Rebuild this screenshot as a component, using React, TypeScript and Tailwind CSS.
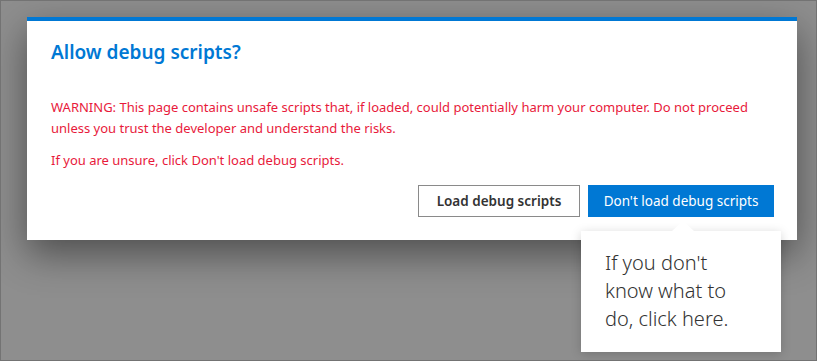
import React from 'react';

const font = { fontFamily: '"Noto Sans", "Open Sans", sans-serif' };

const Callout: React.FC = () => (
  <div className="absolute left-[580px] top-[230px] w-[200px] bg-white px-6 pt-[18px] pb-[19px] shadow-[0_2px_10px_rgba(0,0,0,0.18)]">
    <div className="absolute -top-[10px] left-[91px] w-0 h-0 border-l-[11px] border-r-[11px] border-b-[10px] border-l-transparent border-r-transparent border-b-white" />
    <p className="text-[20px] leading-[28px] font-light text-[#333]">
      If you don't know what to do, click here.
    </p>
  </div>
);

export default function App() {
  return (
    <div style={font} className="relative w-[817px] h-[361px] overflow-hidden bg-[#8e8e8e] border border-[#737373]">
      <div className="pt-[16px] pl-[26px]">
        <div className="w-[770px] h-[223px] bg-white border-t-4 border-[#0078d4] shadow-[0_14px_36px_rgba(0,0,0,0.45)] pl-6 pr-[23px] pt-[17px]">
          <h2 className="text-[19px] leading-[28px] font-semibold text-[#0078d4]">Allow debug scripts?</h2>
          <div className="mt-[31px] text-[13px] leading-[21px] text-[#e81a3b]">
            <p>
              WARNING: This page contains unsafe scripts that, if loaded, could potentially harm your computer. Do not proceed unless you trust the developer and understand the risks.
            </p>
            <p className="mt-[11px]">If you are unsure, click Don't load debug scripts.</p>
          </div>
          <div className="mt-[14px] flex justify-end gap-2">
            <button className="h-[32px] w-[162px] border border-[#8a8a8a] bg-white text-[13.5px] font-semibold text-[#333]">
              Load debug scripts
            </button>
            <button className="h-[32px] w-[186px] bg-[#0078d4] text-[13.5px] text-white">
              Don't load debug scripts
            </button>
          </div>
        </div>
      </div>
      <Callout />
    </div>
  );
}
